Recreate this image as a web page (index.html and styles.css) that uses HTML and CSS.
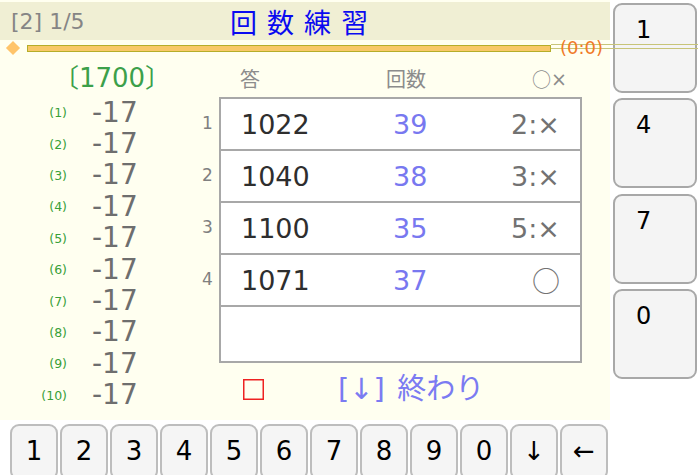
FILE: index.html
```html
<!DOCTYPE html>
<html lang="ja">
<head>
<meta charset="utf-8">
<title>回数練習</title>
<link rel="stylesheet" href="styles.css">
</head>
<body>
<div class="app">
  <div class="main">
    <div class="header">
      <span class="count">[2] 1/5</span>
      <span class="title">回 数 練 習</span>
    </div>
    <div class="progress">
      <span class="diamond"></span>
      <div class="bar"></div>
      <span class="score">(0:0)</span>
    </div>
    <div class="content">
      <div class="list">
        <div class="target">〔1700〕</div>
        <div class="item"><span class="idx">(1)</span><span class="val">-17</span></div>
        <div class="item"><span class="idx">(2)</span><span class="val">-17</span></div>
        <div class="item"><span class="idx">(3)</span><span class="val">-17</span></div>
        <div class="item"><span class="idx">(4)</span><span class="val">-17</span></div>
        <div class="item"><span class="idx">(5)</span><span class="val">-17</span></div>
        <div class="item"><span class="idx">(6)</span><span class="val">-17</span></div>
        <div class="item"><span class="idx">(7)</span><span class="val">-17</span></div>
        <div class="item"><span class="idx">(8)</span><span class="val">-17</span></div>
        <div class="item"><span class="idx">(9)</span><span class="val">-17</span></div>
        <div class="item"><span class="idx">(10)</span><span class="val">-17</span></div>
      </div>
      <div class="work">
        <div class="thead">
          <span class="h-ans">答</span>
          <span class="h-cnt">回数</span>
          <span class="h-res"><span class="o">○</span><span class="x">×</span></span>
        </div>
        <div class="row"><span class="num">1</span><div class="cell"><span class="ans">1022</span><span class="cnt">39</span><span class="res">2:×</span></div></div>
        <div class="row"><span class="num">2</span><div class="cell"><span class="ans">1040</span><span class="cnt">38</span><span class="res">3:×</span></div></div>
        <div class="row"><span class="num">3</span><div class="cell"><span class="ans">1100</span><span class="cnt">35</span><span class="res">5:×</span></div></div>
        <div class="row"><span class="num">4</span><div class="cell"><span class="ans">1071</span><span class="cnt">37</span><span class="res circle">○</span></div></div>
        <div class="row last"><span class="num"></span><div class="cell empty"></div></div>
        <div class="footer">
          <svg class="check" width="21" height="21" viewBox="0 0 21 21"><rect x="0.75" y="0.75" width="19.5" height="19.5" fill="none" stroke="#ee2222" stroke-width="1.5"/></svg>
          <span class="finish">[↓] 終わり</span>
        </div>
      </div>
    </div>
  </div>
  <div class="side">
    <div class="sbtn">1</div>
    <div class="sbtn">4</div>
    <div class="sbtn">7</div>
    <div class="sbtn">0</div>
  </div>
  <div class="trail"></div>
</div>
<div class="keys">
  <div class="key">1</div>
  <div class="key">2</div>
  <div class="key">3</div>
  <div class="key">4</div>
  <div class="key">5</div>
  <div class="key">6</div>
  <div class="key">7</div>
  <div class="key">8</div>
  <div class="key">9</div>
  <div class="key">0</div>
  <div class="key">↓</div>
  <div class="key">←</div>
</div>
</body>
</html>
```
FILE: styles.css
```css
* { box-sizing: border-box; }
html, body {
  margin: 0;
  padding: 0;
  background: #ffffff;
  width: 698px;
  height: 475px;
  overflow: hidden;
  font-family: "DejaVu Sans", "Noto Sans CJK JP", sans-serif;
}
.app {
  position: relative;
  display: flex;
  height: 420px;
}
.main {
  width: 610px;
  height: 420px;
  background: #fffff0;
  display: flex;
  flex-direction: column;
}
.header {
  margin-top: 2px;
  height: 38px;
  background: #f0efd4;
  display: flex;
  align-items: center;
  padding-left: 11px;
}
.count {
  font-size: 22px;
  color: #858585;
  width: 219px;
}
.title {
  font-family: "Noto Sans CJK JP", sans-serif;
  font-size: 27px;
  color: #0a0af0;
  letter-spacing: 2px;
  line-height: 1;
}
.progress {
  height: 16px;
  display: flex;
  align-items: center;
  padding-left: 8px;
}
.diamond {
  width: 10px;
  height: 10px;
  background: #ffc46a;
  transform: rotate(45deg);
  margin-right: 9px;
}
.bar {
  width: 524px;
  height: 7px;
  background: #f8c868;
  border: 1.5px solid #b5ad2a;
}
.score {
  margin-left: 9px;
  font-size: 18px;
  color: #f07a28;
  line-height: 1;
  position: relative;
  z-index: 2;
}
.trail {
  position: absolute;
  left: 551px;
  top: 44px;
  width: 147px;
  height: 5px;
  border-top: 1px solid #c8c478;
  border-bottom: 1px solid #c8c478;
  z-index: 1;
}
.content {
  display: flex;
  padding-top: 4px;
}
.list {
  width: 200px;
}
.target {
  height: 37px;
  font-size: 26px;
  color: #3ca04a;
  text-align: center;
  padding-left: 24px;
  line-height: 37px;
}
.item {
  height: 31.4px;
  display: flex;
  align-items: center;
}
.idx {
  width: 67px;
  text-align: right;
  font-size: 12.5px;
  color: #38a038;
}
.val {
  margin-left: 25px;
  font-size: 28px;
  color: #6e6e6e;
  line-height: 1;
}
.work {
  width: 382px;
  display: flex;
  flex-direction: column;
}
.thead {
  height: 37px;
  display: flex;
  align-items: center;
  color: #8c8c8c;
  font-family: "Noto Sans CJK JP", sans-serif;
  font-size: 20px;
  padding-left: 19px;
}
.h-ans { margin-left: 21px; width: 146px; }
.h-cnt { width: 146px; }
.h-res { display: flex; align-items: center; }
.h-res .o { font-family: "Noto Sans CJK JP", sans-serif; font-size: 19px; }
.h-res .x { font-family: "DejaVu Sans", sans-serif; font-size: 19px; }
.row {
  display: flex;
  height: 52px;
}
.row.last { height: 58px; }
.num {
  width: 19px;
  font-size: 17px;
  color: #808080;
  display: flex;
  align-items: center;
  padding-left: 2px;
}
.cell {
  width: 363px;
  background: #ffffff;
  border: 2px solid #a8a8a8;
  border-bottom: none;
  display: flex;
  align-items: center;
  padding: 0 20px 0 20px;
  font-size: 27px;
  line-height: 1;
}
.cell.empty {
  border-bottom: 2px solid #a8a8a8;
}
.ans { width: 152px; color: #2e2e2e; }
.cnt { width: 100px; color: #7878f0; }
.res { flex: 1; text-align: right; color: #727272; }
.res.circle {
  font-family: "Noto Sans CJK JP", sans-serif;
  font-size: 28px;
}
.footer {
  display: flex;
  align-items: center;
  padding-top: 12px;
  padding-left: 43px;
}
.check {
  display: block;
  flex: none;
}
.finish {
  margin-left: 74px;
  font-family: "DejaVu Sans", "Noto Sans CJK JP", sans-serif;
  font-size: 29px;
  color: #7b7bf2;
  line-height: 1;
  word-spacing: 3px;
}
.side {
  width: 88px;
  padding: 3px 1px 0 3px;
  display: flex;
  flex-direction: column;
  gap: 5.3px;
}
.sbtn {
  width: 84px;
  height: 90px;
  background: #f4f4f4;
  border: 2px solid #a8a8a8;
  border-radius: 9px;
  font-size: 24px;
  color: #000;
  padding: 11px 0 0 21px;
  line-height: 1.2;
}
.keys {
  display: flex;
  gap: 2px;
  padding: 4px 0 0 10px;
}
.key {
  width: 48px;
  height: 56px;
  background: #f5f5f5;
  border: 2px solid #bdbdbd;
  border-radius: 9px;
  font-size: 26px;
  color: #000;
  text-align: center;
  padding-top: 10px;
  line-height: 1.2;
}
```
